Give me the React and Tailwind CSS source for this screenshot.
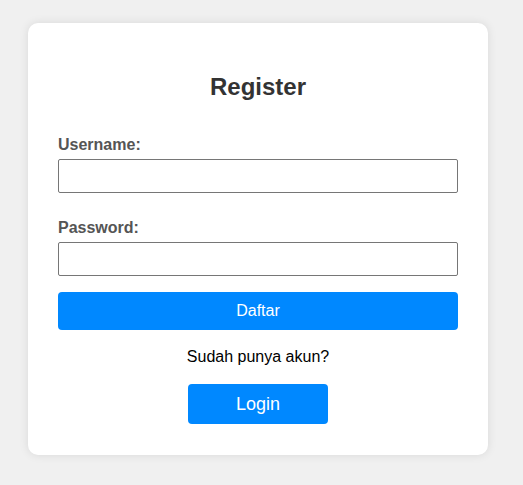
import { useState } from "react";

export default function App() {
  const [form, setForm] = useState({ username: "", password: "" });

  return (
    <div
      className="min-h-screen bg-[#f0f0f0] pl-[28px] pt-[23px] text-black"
      style={{ fontFamily: '"Liberation Sans", Arial, sans-serif' }}
    >
      <div className="w-[460px] rounded-[10px] bg-white px-[30px] pt-[30px] pb-[31px] shadow-[0_0_10px_rgba(0,0,0,0.1)]">
        <h2 className="mt-[20px] mb-[35px] text-center text-[24px] leading-[28px] font-bold text-[#333]">
          Register
        </h2>

        <form onSubmit={(e) => e.preventDefault()}>
          <Field label="Username:">
            <input
              type="text"
              className="input"
              value={form.username}
              onChange={(e) => setForm({ ...form, username: e.target.value })}
            />
          </Field>
          <div className="h-[26px]" />
          <Field label="Password:">
            <input
              type="password"
              className="input"
              value={form.password}
              onChange={(e) => setForm({ ...form, password: e.target.value })}
            />
          </Field>

          <button
            type="submit"
            className="mt-[16px] block h-[38px] w-full rounded-[4px] bg-[#0088ff] text-[16px] text-white"
          >
            Daftar
          </button>
        </form>

        <p className="mt-[18px] text-center text-[16px] leading-[18px]">Sudah punya akun?</p>

        <div className="mt-[18px] flex justify-center">
          <button className="h-[40px] w-[140px] rounded-[4px] bg-[#0088ff] text-[18px] text-white">
            Login
          </button>
        </div>
      </div>

      <style>{`
        .input {
          display: block;
          width: 100%;
          height: 34px;
          padding: 0 8px;
          font-size: 16px;
          border: 1px solid #767676;
          border-radius: 2px;
          background: white;
        }
        .input:focus {
          outline: none;
        }
      `}</style>
    </div>
  );
}

function Field({ label, children }) {
  return (
    <label className="block">
      <span className="mb-[5px] block text-[16px] leading-[18px] font-bold text-[#555]">{label}</span>
      {children}
    </label>
  );
}
